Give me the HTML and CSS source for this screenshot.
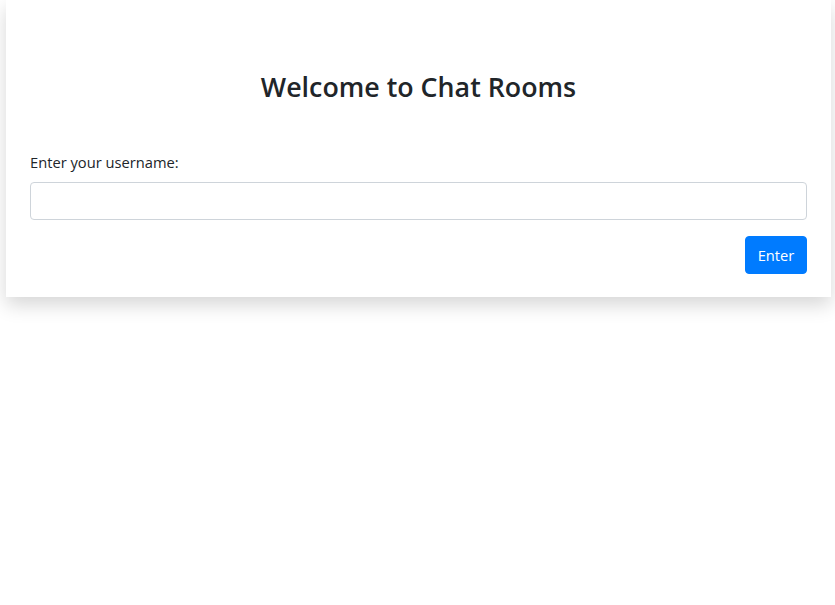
FILE: index.html
```html
<!DOCTYPE html>
<html lang="en">
<head>
<meta charset="utf-8">
<title>Chat Rooms</title>
<link rel="stylesheet" href="styles.css">
</head>
<body>
<div class="card">
  <h2 class="title">Welcome to Chat Rooms</h2>
  <form class="form">
    <label class="label" for="username">Enter your username:</label>
    <input class="input" id="username" type="text">
    <div class="actions">
      <button class="btn" type="button">Enter</button>
    </div>
  </form>
</div>
</body>
</html>
```

FILE: styles.css
```css
* { box-sizing: border-box; }
html, body { margin: 0; padding: 0; background: #fff; }
body {
  font-family: "Open Sans", "Noto Sans", sans-serif;
  color: #212529;
  font-size: 14.7px;
  line-height: 1.5;
  padding: 0 4px 40px 6px;
}
.card {
  background: #fff;
  box-shadow: 0 8px 18px rgba(0,0,0,0.16);
  padding: 70px 24px 23px;
}
.title {
  margin: 0 0 46px;
  text-align: center;
  font-size: 26.8px;
  font-weight: 600;
  line-height: 34px;
  color: #212529;
}
.form { display: flex; flex-direction: column; }
.label {
  display: block;
  line-height: 24px;
  margin-bottom: 8px;
}
.input {
  display: block;
  width: 100%;
  height: 38px;
  border: 1px solid #ced4da;
  border-radius: 4px;
  font: inherit;
  padding: 6px 12px;
}
.actions {
  display: flex;
  justify-content: flex-end;
  margin-top: 16px;
}
.btn {
  height: 38px;
  width: 62px;
  background: #007bff;
  color: #fff;
  border: 1px solid #007bff;
  border-radius: 4px;
  font: inherit;
  padding: 0;
}
```
